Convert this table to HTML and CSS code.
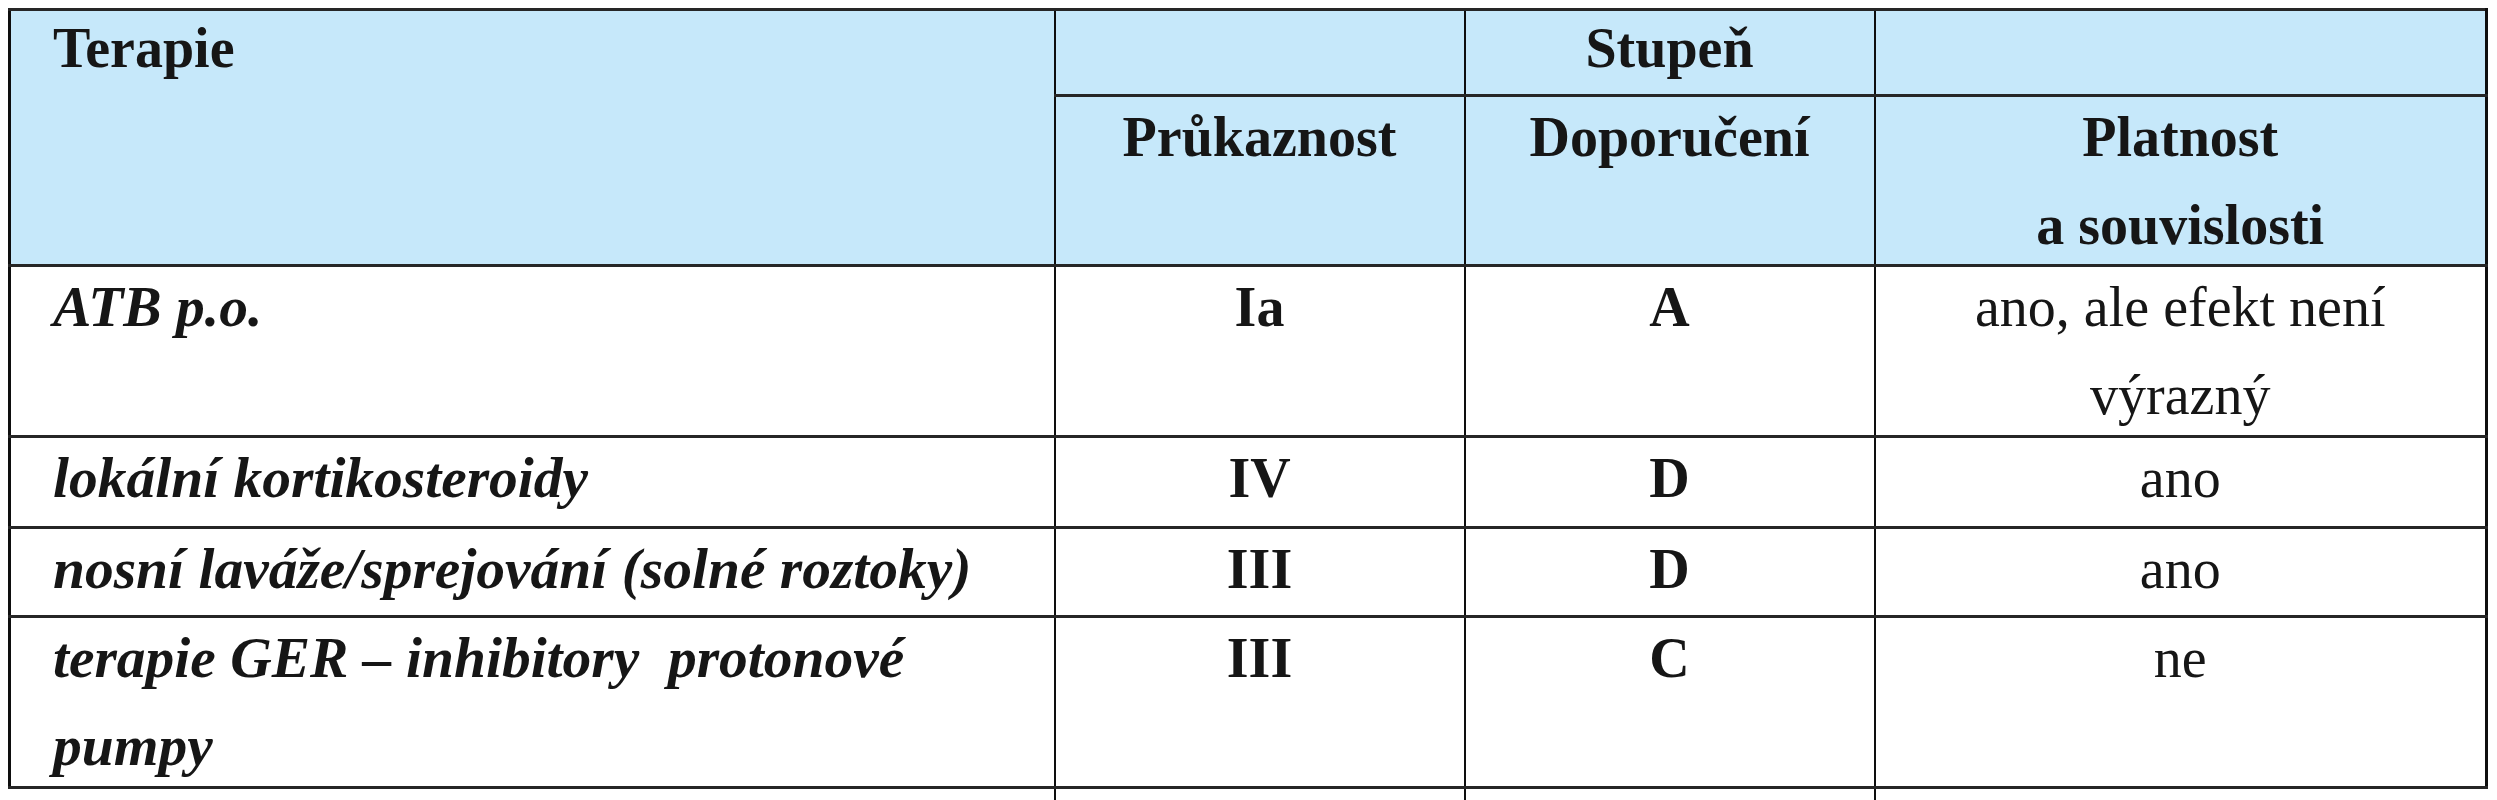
FILE: index.html
```html
<!DOCTYPE html>
<html lang="cs">
<head>
<meta charset="utf-8">
<title>Terapie – stupeň průkaznosti a doporučení</title>
<link rel="stylesheet" href="styles.css">
</head>
<body>
<table class="grid">
  <colgroup>
    <col class="c-ther">
    <col class="c-mid">
    <col class="c-mid">
    <col class="c-last">
  </colgroup>
  <thead>
    <tr class="h-top">
      <th rowspan="2" class="first"><div class="t">Terapie</div></th>
      <th></th>
      <th><div class="t">Stupeň</div></th>
      <th class="last"></th>
    </tr>
    <tr class="h-sub">
      <th><div class="t">Průkaznost</div></th>
      <th><div class="t">Doporučení</div></th>
      <th class="last"><div class="t">Platnost<br>a souvislosti</div></th>
    </tr>
  </thead>
  <tbody>
    <tr class="r-two">
      <td class="first"><div class="t">ATB p.o.</div></td>
      <td class="grade"><div class="t">Ia</div></td>
      <td class="grade"><div class="t">A</div></td>
      <td class="last"><div class="t">ano, ale efekt není výrazný</div></td>
    </tr>
    <tr class="r-one">
      <td class="first"><div class="t">lokální kortikosteroidy</div></td>
      <td class="grade"><div class="t">IV</div></td>
      <td class="grade"><div class="t">D</div></td>
      <td class="last"><div class="t">ano</div></td>
    </tr>
    <tr class="r-one b">
      <td class="first"><div class="t">nosní laváže/sprejování (solné roztoky)</div></td>
      <td class="grade"><div class="t">III</div></td>
      <td class="grade"><div class="t">D</div></td>
      <td class="last"><div class="t">ano</div></td>
    </tr>
    <tr class="r-two">
      <td class="first"><div class="t">terapie GER – inhibitory&nbsp; protonové pumpy</div></td>
      <td class="grade"><div class="t">III</div></td>
      <td class="grade"><div class="t">C</div></td>
      <td class="last"><div class="t">ne</div></td>
    </tr>
    <tr class="stub">
      <td class="first"></td>
      <td></td>
      <td></td>
      <td class="last"></td>
    </tr>
  </tbody>
</table>
</body>
</html>
```

FILE: styles.css
```css
html, body {
  margin: 0;
  padding: 0;
  background: #ffffff;
}

body {
  padding: 8px 0 0 8px;
  overflow: hidden;
}

.grid {
  border-collapse: collapse;
  table-layout: fixed;
  width: 2480px;
  font-family: "Liberation Serif", "Times New Roman", serif;
  font-size: 56px;
  color: #161616;
}

col.c-ther { width: 1045px; }
col.c-mid  { width: 410px; }
col.c-last { width: 612px; }

.grid th,
.grid td {
  border-top: 3px solid #262626;
  border-bottom: 3px solid #262626;
  border-left: 2px solid #0e0e0e;
  border-right: 2px solid #0e0e0e;
  padding: 0 38px;
  vertical-align: top;
  text-align: center;
  line-height: 88px;
  font-weight: normal;
}

.grid .t {
  margin: -4px 0 -14px;
}

.grid .h-top .t {
  margin-top: -7px;
}

.grid thead th {
  background: #c6e8fa;
  font-weight: bold;
}

.grid .first {
  border-left-width: 3px;
  padding-left: 42px;
  text-align: left;
}

.grid .last {
  border-right-width: 3px;
}

.grid tbody .first {
  font-weight: bold;
  font-style: italic;
  font-size: 57.5px;
}

.grid .grade {
  font-weight: bold;
}

.h-top { height: 86px; }
.h-sub { height: 170px; }
.r-two { height: 171px; }
.r-one { height: 91px; }
.r-one.b { height: 89px; }

.grid .stub td {
  height: 20px;
  border-bottom: none;
  line-height: 1px;
}

.grid .stub .first { border-left: none; }
.grid .stub .last { border-right: none; }
```
